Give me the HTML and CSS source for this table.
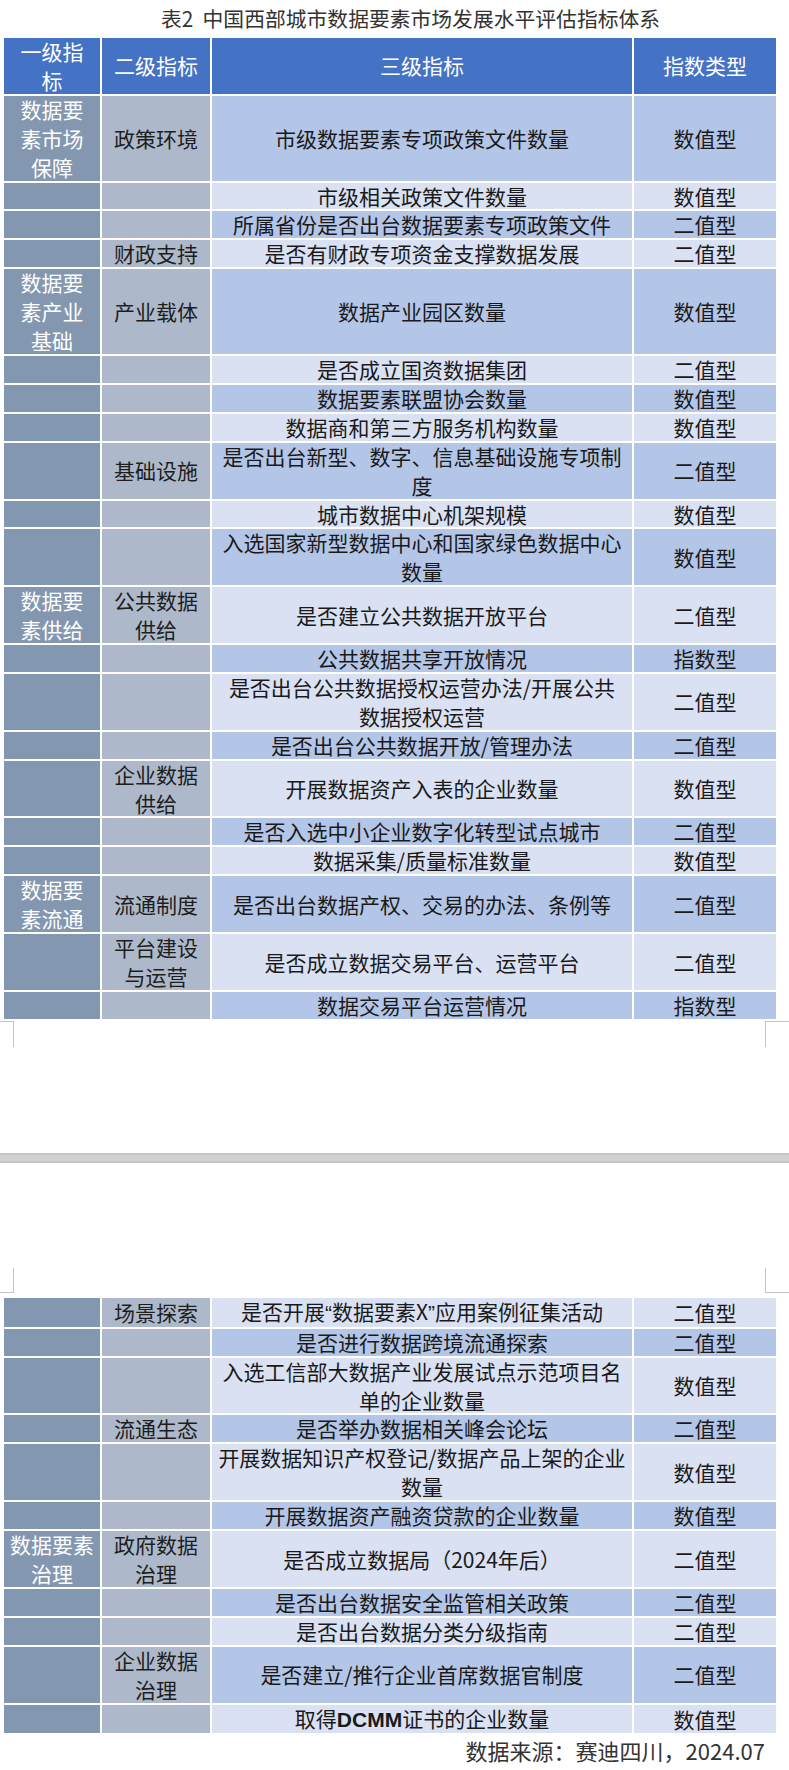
FILE: index.html
```html
<!DOCTYPE html>
<html lang="zh-CN">
<head>
<meta charset="utf-8">
<title>表2 中国西部城市数据要素市场发展水平评估指标体系</title>
<link rel="stylesheet" href="styles.css">
</head>
<body>
<div class="page">
  <div class="title">表2&nbsp;&nbsp;中国西部城市数据要素市场发展水平评估指标体系</div>

  <div class="tbl">
    <div class="row head">
      <div class="cell c1"><span>一级指<br>标</span></div>
      <div class="cell c2"><span>二级指标</span></div>
      <div class="cell c3"><span>三级指标</span></div>
      <div class="cell c4"><span>指数类型</span></div>
    </div>
    <div class="row dark">
      <div class="cell c1"><span>数据要<br>素市场<br>保障</span></div>
      <div class="cell c2"><span>政策环境</span></div>
      <div class="cell c3"><span>市级数据要素专项政策文件数量</span></div>
      <div class="cell c4"><span>数值型</span></div>
    </div>
    <div class="row light">
      <div class="cell c1"></div><div class="cell c2"></div>
      <div class="cell c3"><span>市级相关政策文件数量</span></div>
      <div class="cell c4"><span>数值型</span></div>
    </div>
    <div class="row dark">
      <div class="cell c1"></div><div class="cell c2"></div>
      <div class="cell c3"><span>所属省份是否出台数据要素专项政策文件</span></div>
      <div class="cell c4"><span>二值型</span></div>
    </div>
    <div class="row light">
      <div class="cell c1"></div>
      <div class="cell c2"><span>财政支持</span></div>
      <div class="cell c3"><span>是否有财政专项资金支撑数据发展</span></div>
      <div class="cell c4"><span>二值型</span></div>
    </div>
    <div class="row dark">
      <div class="cell c1"><span>数据要<br>素产业<br>基础</span></div>
      <div class="cell c2"><span>产业载体</span></div>
      <div class="cell c3"><span>数据产业园区数量</span></div>
      <div class="cell c4"><span>数值型</span></div>
    </div>
    <div class="row light">
      <div class="cell c1"></div><div class="cell c2"></div>
      <div class="cell c3"><span>是否成立国资数据集团</span></div>
      <div class="cell c4"><span>二值型</span></div>
    </div>
    <div class="row dark">
      <div class="cell c1"></div><div class="cell c2"></div>
      <div class="cell c3"><span>数据要素联盟协会数量</span></div>
      <div class="cell c4"><span>数值型</span></div>
    </div>
    <div class="row light">
      <div class="cell c1"></div><div class="cell c2"></div>
      <div class="cell c3"><span>数据商和第三方服务机构数量</span></div>
      <div class="cell c4"><span>数值型</span></div>
    </div>
    <div class="row dark">
      <div class="cell c1"></div>
      <div class="cell c2"><span>基础设施</span></div>
      <div class="cell c3"><span>是否出台新型、数字、信息基础设施专项制<br>度</span></div>
      <div class="cell c4"><span>二值型</span></div>
    </div>
    <div class="row light">
      <div class="cell c1"></div><div class="cell c2"></div>
      <div class="cell c3"><span>城市数据中心机架规模</span></div>
      <div class="cell c4"><span>数值型</span></div>
    </div>
    <div class="row dark">
      <div class="cell c1"></div><div class="cell c2"></div>
      <div class="cell c3"><span>入选国家新型数据中心和国家绿色数据中心<br>数量</span></div>
      <div class="cell c4"><span>数值型</span></div>
    </div>
    <div class="row light">
      <div class="cell c1"><span>数据要<br>素供给</span></div>
      <div class="cell c2"><span>公共数据<br>供给</span></div>
      <div class="cell c3"><span>是否建立公共数据开放平台</span></div>
      <div class="cell c4"><span>二值型</span></div>
    </div>
    <div class="row dark">
      <div class="cell c1"></div><div class="cell c2"></div>
      <div class="cell c3"><span>公共数据共享开放情况</span></div>
      <div class="cell c4"><span>指数型</span></div>
    </div>
    <div class="row light">
      <div class="cell c1"></div><div class="cell c2"></div>
      <div class="cell c3"><span>是否出台公共数据授权运营办法/开展公共<br>数据授权运营</span></div>
      <div class="cell c4"><span>二值型</span></div>
    </div>
    <div class="row dark">
      <div class="cell c1"></div><div class="cell c2"></div>
      <div class="cell c3"><span>是否出台公共数据开放/管理办法</span></div>
      <div class="cell c4"><span>二值型</span></div>
    </div>
    <div class="row light">
      <div class="cell c1"></div>
      <div class="cell c2"><span>企业数据<br>供给</span></div>
      <div class="cell c3"><span>开展数据资产入表的企业数量</span></div>
      <div class="cell c4"><span>数值型</span></div>
    </div>
    <div class="row dark">
      <div class="cell c1"></div><div class="cell c2"></div>
      <div class="cell c3"><span>是否入选中小企业数字化转型试点城市</span></div>
      <div class="cell c4"><span>二值型</span></div>
    </div>
    <div class="row light">
      <div class="cell c1"></div><div class="cell c2"></div>
      <div class="cell c3"><span>数据采集/质量标准数量</span></div>
      <div class="cell c4"><span>数值型</span></div>
    </div>
    <div class="row dark">
      <div class="cell c1"><span>数据要<br>素流通</span></div>
      <div class="cell c2"><span>流通制度</span></div>
      <div class="cell c3"><span>是否出台数据产权、交易的办法、条例等</span></div>
      <div class="cell c4"><span>二值型</span></div>
    </div>
    <div class="row light">
      <div class="cell c1"></div>
      <div class="cell c2"><span>平台建设<br>与运营</span></div>
      <div class="cell c3"><span>是否成立数据交易平台、运营平台</span></div>
      <div class="cell c4"><span>二值型</span></div>
    </div>
    <div class="row dark">
      <div class="cell c1"></div><div class="cell c2"></div>
      <div class="cell c3"><span>数据交易平台运营情况</span></div>
      <div class="cell c4"><span>指数型</span></div>
    </div>
  </div>

  <div class="marks marks-bottom">
    <div class="mark-left"></div>
    <div class="mark-right"></div>
  </div>
  <div class="page-gap"></div>
  <div class="marks marks-top">
    <div class="mark-left"></div>
    <div class="mark-right"></div>
  </div>

  <div class="tbl tbl2">
    <div class="row light">
      <div class="cell c1"></div>
      <div class="cell c2"><span>场景探索</span></div>
      <div class="cell c3"><span>是否开展<i class="q">“</i>数据要素X<i class="q">”</i>应用案例征集活动</span></div>
      <div class="cell c4"><span>二值型</span></div>
    </div>
    <div class="row dark">
      <div class="cell c1"></div><div class="cell c2"></div>
      <div class="cell c3"><span>是否进行数据跨境流通探索</span></div>
      <div class="cell c4"><span>二值型</span></div>
    </div>
    <div class="row light">
      <div class="cell c1"></div><div class="cell c2"></div>
      <div class="cell c3"><span>入选工信部大数据产业发展试点示范项目名<br>单的企业数量</span></div>
      <div class="cell c4"><span>数值型</span></div>
    </div>
    <div class="row dark">
      <div class="cell c1"></div>
      <div class="cell c2"><span>流通生态</span></div>
      <div class="cell c3"><span>是否举办数据相关峰会论坛</span></div>
      <div class="cell c4"><span>二值型</span></div>
    </div>
    <div class="row light">
      <div class="cell c1"></div><div class="cell c2"></div>
      <div class="cell c3"><span>开展数据知识产权登记/数据产品上架的企业<br>数量</span></div>
      <div class="cell c4"><span>数值型</span></div>
    </div>
    <div class="row dark">
      <div class="cell c1"></div><div class="cell c2"></div>
      <div class="cell c3"><span>开展数据资产融资贷款的企业数量</span></div>
      <div class="cell c4"><span>数值型</span></div>
    </div>
    <div class="row light">
      <div class="cell c1"><span>数据要素<br>治理</span></div>
      <div class="cell c2"><span>政府数据<br>治理</span></div>
      <div class="cell c3"><span>是否成立数据局（2024年后）</span></div>
      <div class="cell c4"><span>二值型</span></div>
    </div>
    <div class="row dark">
      <div class="cell c1"></div><div class="cell c2"></div>
      <div class="cell c3"><span>是否出台数据安全监管相关政策</span></div>
      <div class="cell c4"><span>二值型</span></div>
    </div>
    <div class="row light">
      <div class="cell c1"></div><div class="cell c2"></div>
      <div class="cell c3"><span>是否出台数据分类分级指南</span></div>
      <div class="cell c4"><span>二值型</span></div>
    </div>
    <div class="row dark">
      <div class="cell c1"></div>
      <div class="cell c2"><span>企业数据<br>治理</span></div>
      <div class="cell c3"><span>是否建立/推行企业首席数据官制度</span></div>
      <div class="cell c4"><span>二值型</span></div>
    </div>
    <div class="row light">
      <div class="cell c1"></div><div class="cell c2"></div>
      <div class="cell c3"><span>取得<b class="latin">DCMM</b>证书的企业数量</span></div>
      <div class="cell c4"><span>数值型</span></div>
    </div>
  </div>

  <div class="source">数据来源：赛迪四川，2024.07</div>
</div>
</body>
</html>
```

FILE: styles.css
```css
* {
  box-sizing: border-box;
}

html, body {
  margin: 0;
  padding: 0;
  background: #ffffff;
}

body {
  font-family: "Noto Sans CJK SC", "Noto Sans", sans-serif;
  color: #222222;
}

.page {
  width: 789px;
}

.title {
  height: 38px;
  line-height: 36px;
  padding-left: 32px;
  text-align: center;
  font-size: 20.8px;
  color: #333333;
  white-space: nowrap;
}

.tbl {
  display: flex;
  flex-direction: column;
  gap: 2px;
  width: 772px;
  margin-left: 4px;
}

.row {
  display: grid;
  grid-template-columns: 96px 108px 420px 142px;
  column-gap: 2px;
}

.cell {
  display: flex;
  align-items: center;
  justify-content: center;
  text-align: center;
  font-size: 21px;
  white-space: nowrap;
  overflow: visible;
}

.cell > span {
  display: block;
  line-height: 28.9px;
  margin: -1px 0;
}

.c1 {
  background: #8497b0;
  color: #ffffff;
}

.c2 {
  background: #adb9ca;
  color: #1e1e1e;
}

.c3, .c4 {
  color: #1a1a1a;
}

.row.dark .c3,
.row.dark .c4 {
  background: #b4c6e7;
}

.row.light .c3,
.row.light .c4 {
  background: #d9e1f2;
}

.row.head .cell {
  background: #4472c4;
  color: #ffffff;
}

.latin {
  font-family: "Liberation Sans", "Noto Sans", sans-serif;
  font-weight: 700;
}

.q {
  font-style: normal;
  font-family: "Liberation Sans", sans-serif;
}

.marks {
  display: flex;
  justify-content: space-between;
}

.marks-bottom {
  margin-top: 2px;
  height: 26px;
}

.marks-top {
  margin-top: 105px;
  height: 25px;
}

.mark-left,
.mark-right {
  height: 100%;
  border-color: #c4c4c4;
  border-style: solid;
  border-width: 0;
}

.mark-left {
  width: 14px;
  border-right-width: 1px;
}

.mark-right {
  width: 24px;
  border-left-width: 1px;
}

.marks-bottom .mark-left,
.marks-bottom .mark-right {
  border-top-width: 1px;
}

.marks-top .mark-left,
.marks-top .mark-right {
  border-bottom-width: 1px;
}

.page-gap {
  margin-top: 106px;
  height: 10px;
  background: #d2d2d2;
  border-top: 2px solid #c6c6c6;
  border-bottom: 2px solid #c6c6c6;
}

.tbl2 {
  margin-top: 5px;
}

.source {
  margin-top: 2px;
  padding-right: 24px;
  text-align: right;
  font-size: 22px;
  line-height: 30px;
  color: #333333;
}
```
